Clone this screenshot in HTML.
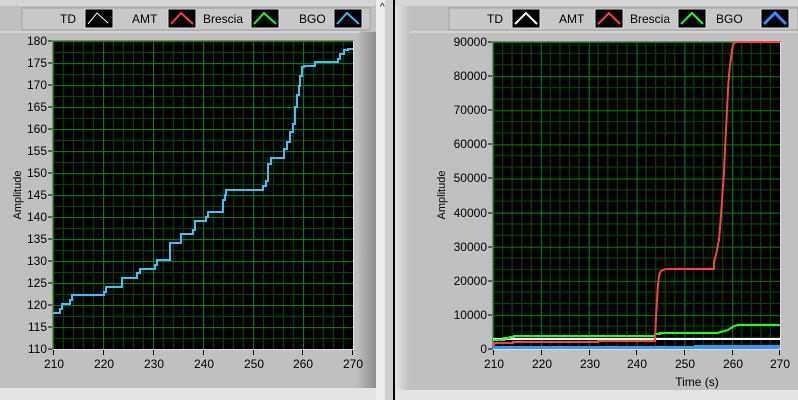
<!DOCTYPE html>
<html><head><meta charset="utf-8"><style>
html,body{margin:0;padding:0;width:798px;height:400px;overflow:hidden;background:#c0c0c0}
svg{display:block}
text{font-family:"Liberation Sans",sans-serif;font-size:12px;fill:#000}
</style></head><body>
<svg width="798" height="400" viewBox="0 0 798 400" xmlns="http://www.w3.org/2000/svg">
<defs>
<pattern id="gL" x="53" y="41" width="50" height="22" patternUnits="userSpaceOnUse">
<rect width="50" height="22" fill="#000"/>
<path d="M10.5 0V22M20.5 0V22M30.5 0V22M40.5 0V22M0 11.5H50" stroke="#063f06" stroke-width="1.3"/>
<path d="M0.5 0V22M0 0.5H50" stroke="#0a7a0a" stroke-width="1.3"/>
</pattern>
<pattern id="gR" x="493" y="42" width="47.83" height="34.11" patternUnits="userSpaceOnUse">
<rect width="48" height="35" fill="#000"/>
<path d="M9.57 0V35M19.13 0V35M28.7 0V35M38.26 0V35M0 11.37H48M0 22.74H48" stroke="#063f06" stroke-width="1.3"/>
<path d="M0.5 0V35M0 0.5H48" stroke="#0a7a0a" stroke-width="1.3"/>
</pattern>
<linearGradient id="shadeR" x1="0" x2="1"><stop offset="0" stop-color="#c0c0c0"/><stop offset="1" stop-color="#8e8e8e"/></linearGradient>
<linearGradient id="shadeL" x1="0" x2="1"><stop offset="0" stop-color="#e4e4e4"/><stop offset="1" stop-color="#c0c0c0"/></linearGradient>
</defs>
<!-- backgrounds -->
<rect x="0" y="0" width="798" height="400" fill="#c0c0c0"/>
<rect x="0" y="0" width="376" height="6" fill="#d6d6d6"/>
<rect x="0" y="388" width="376" height="12" fill="#e4e4e4"/>
<rect x="356" y="32" width="20" height="356" fill="url(#shadeR)"/>
<rect x="376" y="0" width="9" height="400" fill="#ececec"/>
<rect x="385" y="0" width="8" height="400" fill="#d0d0d0"/>
<rect x="393" y="0" width="2" height="400" fill="#000"/>
<rect x="395" y="0" width="14" height="390" fill="url(#shadeL)"/>
<rect x="395" y="0" width="403" height="6" fill="#d6d6d6"/>
<rect x="395" y="390" width="403" height="10" fill="#e4e4e4"/>
<line x1="0" y1="32" x2="360" y2="32" stroke="#e8e8e8"/>
<line x1="409" y1="32" x2="798" y2="32" stroke="#e8e8e8"/>
<text x="380" y="10" style="font-size:10px">^</text>
<!-- left legend -->
<rect x="22" y="8" width="348" height="22" fill="#c8c8c8" stroke="#a0a0a0"/>
<text x="60" y="23">TD</text>
<rect x="85" y="9" width="28" height="19" fill="#000" stroke="#ddd"/>
<polyline points="88,24 97,13 108,23" fill="none" stroke="#fff" stroke-width="1"/>
<text x="132" y="23">AMT</text>
<rect x="168" y="9" width="28" height="19" fill="#000" stroke="#ddd"/>
<polyline points="171,24 181,13 193,24" fill="none" stroke="#ff4040" stroke-width="2"/>
<text x="203" y="23">Brescia</text>
<rect x="251" y="9" width="28" height="19" fill="#000" stroke="#ddd"/>
<polyline points="254,24 264,13 276,24" fill="none" stroke="#20ff20" stroke-width="2"/>
<text x="299" y="23">BGO</text>
<rect x="334" y="9" width="28" height="19" fill="#000" stroke="#ddd"/>
<polyline points="337,24 347,13 359,24" fill="none" stroke="#40b8ff" stroke-width="2"/>
<!-- right legend -->
<rect x="449" y="8" width="349" height="22" fill="#c8c8c8" stroke="#a0a0a0"/>
<text x="487" y="23">TD</text>
<rect x="512" y="9" width="28" height="19" fill="#000" stroke="#ddd"/>
<polyline points="515,24 526,13 537,24" fill="none" stroke="#fff" stroke-width="2"/>
<text x="559" y="23">AMT</text>
<rect x="595" y="9" width="28" height="19" fill="#000" stroke="#ddd"/>
<polyline points="598,24 609,13 620,24" fill="none" stroke="#ff4040" stroke-width="2"/>
<text x="630" y="23">Brescia</text>
<rect x="678" y="9" width="28" height="19" fill="#000" stroke="#ddd"/>
<polyline points="681,24 692,13 703,24" fill="none" stroke="#20ff20" stroke-width="2"/>
<text x="716" y="23">BGO</text>
<rect x="761" y="9" width="28" height="19" fill="#000" stroke="#ddd"/>
<polyline points="764,24 775,13 786,24" fill="none" stroke="#3090ff" stroke-width="3"/>
<!-- left plot -->
<rect x="53" y="41" width="300" height="308" fill="url(#gL)"/>
<rect x="52.5" y="40.5" width="301" height="309" fill="none" stroke="#e0e0e0"/>
<line x1="52.5" y1="40" x2="52.5" y2="350" stroke="#808080"/>
<line x1="52" y1="40.5" x2="354" y2="40.5" stroke="#808080"/>
<polyline fill="none" stroke="#40bfff" stroke-width="2" points="53,313 60,313 60,309 62,309 62,304 70,304 70,300 72,300 72,295 104,295 104,292 106,292 106,287 122,287 122,278 123,278 137,278 137,273 140,273 140,269 155,269 155,265 157,265 157,260 170,260 170,243 181,243 181,234 193,234 193,230 195,230 195,221 206,221 206,217 208,217 208,212 223,212 223,200 225,200 225,195 226,195 226,190 263,190 263,186 266,186 266,181 268,181 268,164 271,164 271,158 284,158 284,149 287,149 287,142 290,142 290,132 293,132 293,124 295,124 295,107 297,107 297,95 299,95 299,86 300,86 300,76 302,76 302,67 304,67 304,66 315,66 315,62 338,62 338,59 340,59 340,54 344,54 344,50 348,50 348,49 353,49"/>
<g>
<text x="47" y="45" text-anchor="end">180</text><text x="47" y="67" text-anchor="end">175</text><text x="47" y="89" text-anchor="end">170</text><text x="47" y="111" text-anchor="end">165</text><text x="47" y="133" text-anchor="end">160</text><text x="47" y="155" text-anchor="end">155</text><text x="47" y="177" text-anchor="end">150</text><text x="47" y="199" text-anchor="end">145</text><text x="47" y="221" text-anchor="end">140</text><text x="47" y="243" text-anchor="end">135</text><text x="47" y="265" text-anchor="end">130</text><text x="47" y="287" text-anchor="end">125</text><text x="47" y="309" text-anchor="end">120</text><text x="47" y="331" text-anchor="end">115</text><text x="47" y="353" text-anchor="end">110</text>
</g>
<path d="M48 41H52M48 63H52M48 85H52M48 107H52M48 129H52M48 151H52M48 173H52M48 195H52M48 217H52M48 239H52M48 261H52M48 283H52M48 305H52M48 327H52M48 349H52" stroke="#000"/>
<path d="M53.5 350V355M103.5 350V355M153.5 350V355M203.5 350V355M253.5 350V355M302.5 350V355M352.5 350V355" stroke="#000"/>
<g text-anchor="middle"><text x="54" y="368">210</text><text x="104" y="368">220</text><text x="154" y="368">230</text><text x="204" y="368">240</text><text x="254" y="368">250</text><text x="303" y="368">260</text><text x="353" y="368">270</text></g>
<text transform="translate(21,195) rotate(-90)" text-anchor="middle" style="font-size:11px">Amplitude</text>
<!-- right plot -->
<rect x="493" y="42" width="287" height="307" fill="url(#gR)"/>
<rect x="492.5" y="41.5" width="288" height="308" fill="none" stroke="#e0e0e0"/>
<line x1="492.5" y1="41" x2="492.5" y2="350" stroke="#808080"/>
<line x1="492" y1="41.5" x2="781" y2="41.5" stroke="#808080"/>
<rect x="493" y="346" width="287" height="3" fill="#3399ff"/>
<rect x="694" y="345" width="86" height="4" fill="#3399ff"/>
<line x1="493" y1="339" x2="780" y2="339" stroke="#fff" stroke-width="2"/>
<polyline fill="none" stroke="#20ff20" stroke-width="2" points="493,340 504,340 504,338 510,338 510,337 514,337 514,336 655,336 655,334 660,334 660,333 718,333 720,332 725,331 728,330 731,328 734,326 738,325 780,325"/>
<polyline fill="none" stroke="#ff4040" stroke-width="2" points="493,345 494,345 494,343 513,343 513,342 598,342 598,341 655,341 656,317 657,300 658,285 659,276 660,273 661,271 663,270 666,269 714,269 714,262 715,258 716,255 717,250 718,244 719,240 720,228 721,215 722,201 723,185 724,173 725,150 726,130 727,110 728,90 729,75 730,65 731,58 732,50 733,45 734,43 736,42 780,42"/>
<g text-anchor="end"><text x="487" y="46">90000</text><text x="487" y="80">80000</text><text x="487" y="114">70000</text><text x="487" y="148">60000</text><text x="487" y="182">50000</text><text x="487" y="217">40000</text><text x="487" y="251">30000</text><text x="487" y="285">20000</text><text x="487" y="319">10000</text><text x="487" y="353">0</text></g>
<path d="M488 42H492M488 76H492M488 110H492M488 144H492M488 178H492M488 213H492M488 247H492M488 281H492M488 315H492M488 349H492" stroke="#000"/>
<path d="M493.5 350V355M541.5 350V355M589.5 350V355M636.5 350V355M684.5 350V355M732.5 350V355M779.5 350V355" stroke="#000"/>
<g text-anchor="middle"><text x="494" y="368">210</text><text x="542" y="368">220</text><text x="590" y="368">230</text><text x="637" y="368">240</text><text x="685" y="368">250</text><text x="733" y="368">260</text><text x="780" y="368">270</text></g>
<text x="697" y="386" text-anchor="middle">Time (s)</text>
<text transform="translate(445,195) rotate(-90)" text-anchor="middle" style="font-size:11px">Amplitude</text>
</svg>
</body></html>
